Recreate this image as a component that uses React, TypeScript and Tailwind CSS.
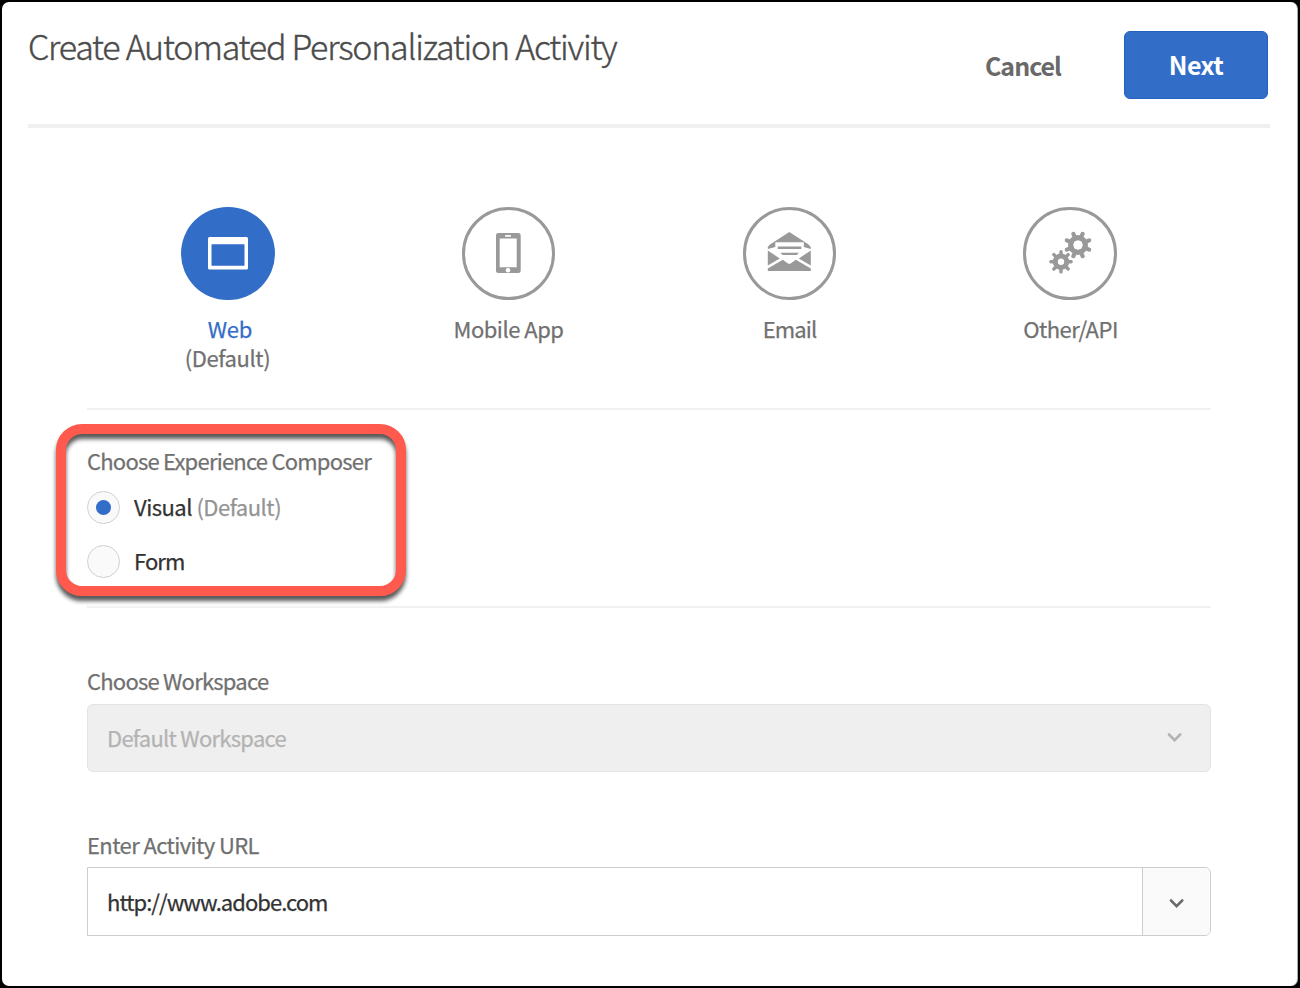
import type { ReactNode } from "react";

function WebIcon() {
  return (
    <svg width="94" height="94" viewBox="0 0 94 94">
      <path
        fillRule="evenodd"
        fill="#fff"
        d="M28.5 30H65.500a1.500 1.500 0 0 1 1.500 1.500V61a1.500 1.500 0 0 1-1.500 1.500H28.500A1.500 1.500 0 0 1 27 61V31.500a1.500 1.500 0 0 1 1.500-1.500zM30.500 37.200V58.800H63.500V37.200z"
      />
    </svg>
  );
}

function PhoneIcon() {
  return (
    <svg width="93" height="93" viewBox="0 0 93 93" fill="#999">
      <path
        fillRule="evenodd"
        d="M36.500 26H56.200a2.500 2.500 0 0 1 2.500 2.500V63.500a2.500 2.500 0 0 1-2.500 2.500H36.500a2.500 2.500 0 0 1-2.500-2.500V28.500A2.500 2.500 0 0 1 36.500 26zM37.700 31.500V60.300H54.700V31.500z"
      />
      <rect x="43" y="28" width="6" height="1.800" rx=".9" fill="#fff" />
      <circle cx="46" cy="63.200" r="2.300" fill="#fff" />
    </svg>
  );
}

function EmailIcon() {
  return (
    <svg width="93" height="93" viewBox="0 0 93 93" fill="#999">
      <g transform="translate(-.7 0)">
        <path d="M47 25 66 37.200 68.500 40V42L61.500 40V35.200H33V40L25.500 42V40L28 37.200z" />
        <path d="M35.500 39.500H59V42H35.500zM38 45.800H56.500L54.500 48H40.500z" />
        <path d="M25.500 43.500 37.500 51.500 25.500 58.500zM68.500 43.500 56.500 51.500 68.500 58.500z" />
        <path d="M25.500 61.500 40.500 52.800 45.300 56.200Q47 57.200 48.700 56.200L53.500 52.800 68.500 61.500V64H25.500z" />
      </g>
    </svg>
  );
}

type GearProps = { cx: number; cy: number; r: number; body: number; hole: number; turn: number; tooth: number };

function Gear({ cx, cy, r, body, hole, turn, tooth }: GearProps) {
  return (
    <g transform={`translate(${cx} ${cy})`}>
      {[0, 45, 90, 135].map((angle) => (
        <g key={angle} transform={`rotate(${angle + turn})`} stroke="#999" strokeWidth={tooth} strokeLinecap="round">
          <path d={`M${-r + tooth / 2} 0H${-hole - 2}M${hole + 2} 0H${r - tooth / 2}`} />
        </g>
      ))}
      <circle r={(body + hole) / 2} fill="none" stroke="#999" strokeWidth={body - hole} />
    </g>
  );
}

function GearsIcon() {
  return (
    <svg width="94" height="93" viewBox="0 0 94 93">
      <Gear cx={55} cy={38} r={14.2} body={10} hole={4.8} turn={22.5} tooth={4.2} />
      <Gear cx={38} cy={54.8} r={11.8} body={8.2} hole={3.2} turn={0} tooth={3.4} />
    </svg>
  );
}

function Chevron({ color }: { color: string }) {
  return (
    <svg width="16" height="10" viewBox="0 0 16 10" fill="none" stroke={color} strokeWidth="2.600" strokeLinecap="round">
      <path d="M2 1.500 7.600 7.100 13.200 1.500" />
    </svg>
  );
}

function Channel({ icon, active, wide, children }: { icon: ReactNode; active?: boolean; wide?: boolean; children: ReactNode }) {
  const shape = active
    ? "w-[94px] bg-[#326ec8]"
    : wide
      ? "-ml-px w-[94px] border-3 border-[#999]"
      : "-ml-px w-[93px] border-3 border-[#999]";
  return (
    <div className="flex flex-col items-center">
      <div className={`flex h-[93px] items-center justify-center rounded-full ${shape}`}>
        <div className="shrink-0">{icon}</div>
      </div>
      <div className="mt-[14px] text-center leading-[29px] whitespace-nowrap">{children}</div>
    </div>
  );
}

function Radio({ checked, children }: { checked?: boolean; children: ReactNode }) {
  return (
    <label className="flex h-[33px] items-center gap-[14px] text-[#323232]">
      <span className="flex size-[33px] items-center justify-center rounded-full border border-[#d0d0d0] bg-[#fafafa]">
        {checked && <span className="size-[15px] rounded-full bg-[#326ec8]" />}
      </span>
      <span className="-mt-[3px] whitespace-nowrap">{children}</span>
    </label>
  );
}

export default function App() {
  return (
    <div className="h-[988px] w-[1300px] overflow-hidden bg-black p-[2px] font-['Noto_Sans_CJK_SC','Noto_Sans',sans-serif] text-[22px] leading-[30px] tracking-[-0.5px] text-[#707070] [-webkit-text-stroke:0.25px_currentColor]">
      <div className="h-[984px] w-[1296px] rounded-[7px] border-r border-[#aaa] bg-white">
        <header className="ml-[26px] flex h-[126px] w-[1242px] items-start border-b-4 border-[#f0f0f0]">
          <h1 className="mt-[20px] text-[34px] leading-[48px] font-light tracking-[-1.24px] whitespace-nowrap text-[#4b4b4b] [-webkit-text-stroke:0.4px_currentColor]">
            Create Automated Personalization Activity
          </h1>
          <div className="mt-[29px] mr-[2px] ml-auto flex items-center gap-[63px] text-[25px] font-bold [-webkit-text-stroke:0]">
            <button className="-mt-px tracking-[-1px] whitespace-nowrap text-[#696969]">Cancel</button>
            <button className="h-[68px] w-[144px] rounded-[6px] border border-[#2262be] bg-[#326ec8] pb-[3px] tracking-[-0.5px] text-white">
              Next
            </button>
          </div>
        </header>

        <main className="ml-[85px] w-[1124px]">
          <section className="grid h-[282px] grid-cols-4 border-b-2 border-[#f1f1f1] pt-[79px]">
            <Channel active icon={<WebIcon />}>
              <div className="pl-[5px] tracking-[-0.2px] text-[#326ec8]">Web</div>
              <div className="tracking-[-0.4px]">(Default)</div>
            </Channel>
            <Channel icon={<PhoneIcon />}>Mobile App</Channel>
            <Channel icon={<EmailIcon />}>
              <span className="tracking-[-0.9px]">Email</span>
            </Channel>
            <Channel wide icon={<GearsIcon />}>
              Other/API
            </Channel>
          </section>

          <section className="relative h-[198px] border-b-2 border-[#f1f1f1] pt-[35px]">
            <div className="absolute top-[14px] -left-[31px] h-[172px] w-[350px] rounded-[26px] border-10 border-[#ff5a4d] drop-shadow-[0_5px_2px_rgba(0,0,0,0.65)]" />
            <h2 className="relative tracking-[-0.78px] whitespace-nowrap">Choose Experience Composer</h2>
            <div className="relative mt-[16px] flex flex-col gap-[21px]">
              <Radio checked>
                Visual <span className="text-[#949494]">(Default)</span>
              </Radio>
              <Radio>
                <span className="tracking-[-0.9px]">Form</span>
              </Radio>
            </div>
          </section>

          <section className="pt-[57px]">
            <h2 className="tracking-[-0.77px]">Choose Workspace</h2>
            <div className="mt-[9px] flex h-[68px] items-center justify-between rounded-[6px] border border-[#e3e3e3] bg-[#efefef] pr-[27px] pl-[19px] text-[#b3b3b3]">
              <span className="-mt-[3px] tracking-[-0.73px]">Default Workspace</span>
              <Chevron color="#b3b3b3" />
            </div>
          </section>

          <section className="pt-[57px]">
            <h2 className="tracking-[-0.6px]">Enter Activity URL</h2>
            <div className="mt-[8px] flex h-[69px] rounded-r-[6px] border border-[#cdcdcd]">
              <span className="flex flex-1 items-center pb-[2px] pl-[19px] tracking-[-0.97px] text-[#323232]">
                http://www.adobe.com
              </span>
              <span className="flex w-[68px] items-center justify-center rounded-r-[5px] border-l border-[#cdcdcd] bg-[#fafafa] pt-[5px]">
                <Chevron color="#6b6b6b" />
              </span>
            </div>
          </section>
        </main>
      </div>
    </div>
  );
}
